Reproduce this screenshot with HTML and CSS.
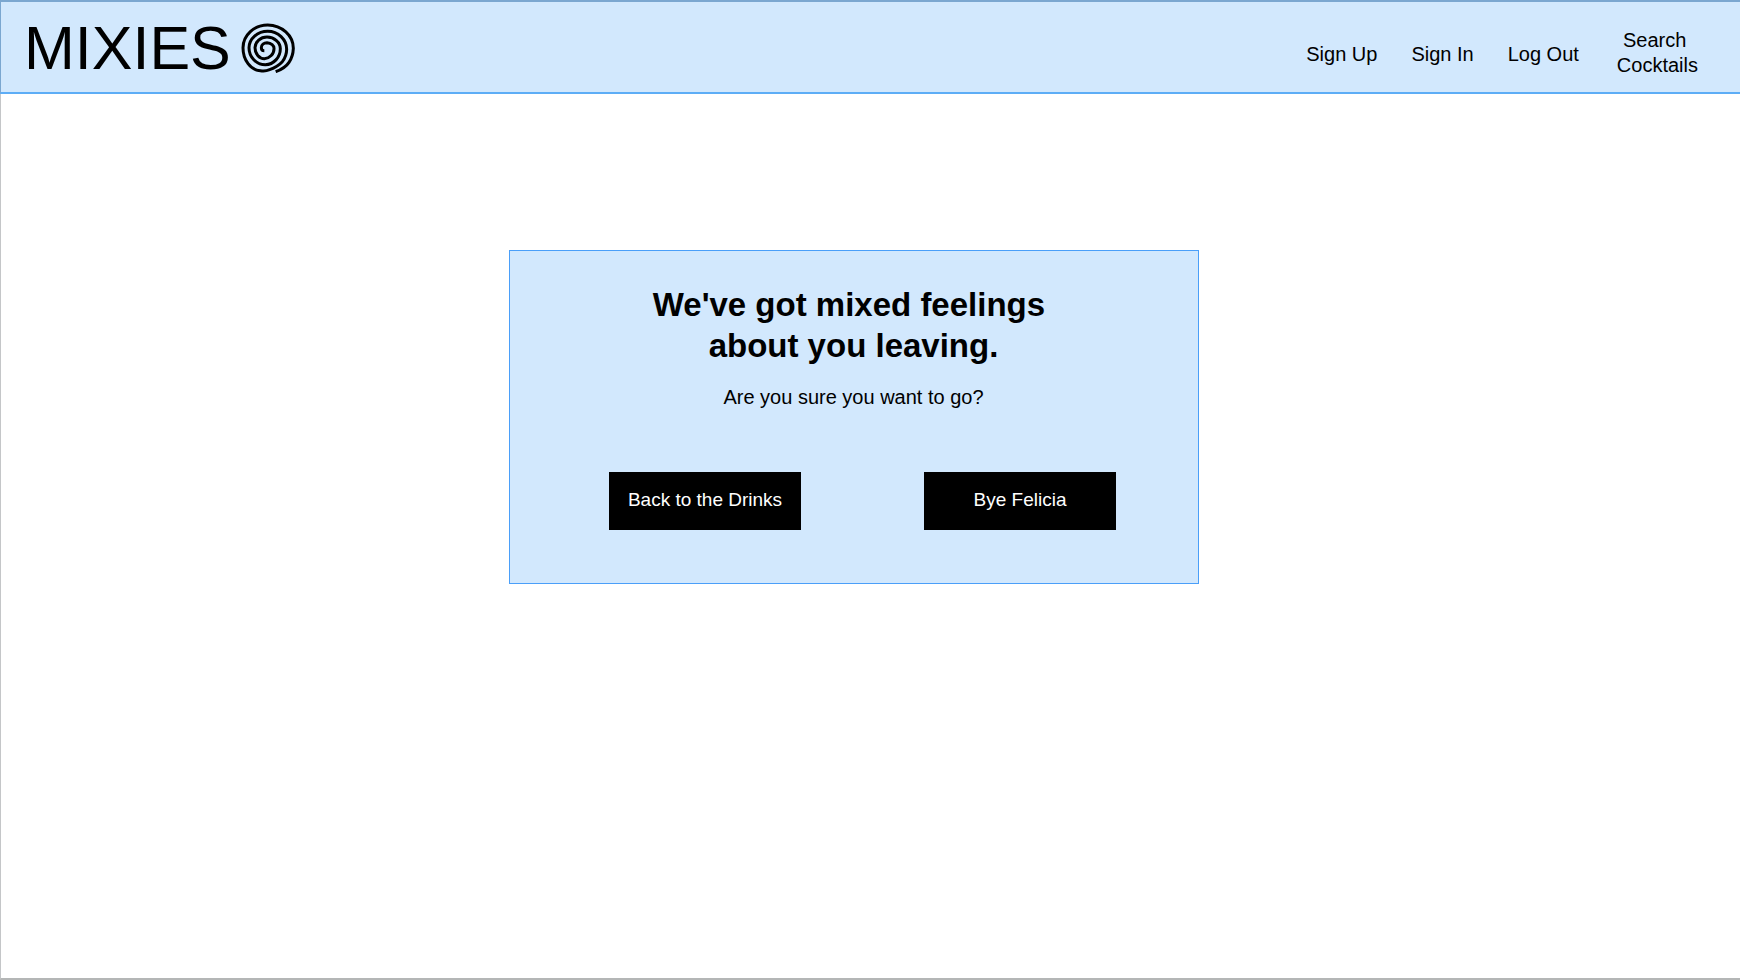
FILE: index.html
```html
<!DOCTYPE html>
<html lang="en">
<head>
<meta charset="utf-8">
<title>Mixies</title>
<link rel="stylesheet" href="styles.css">
</head>
<body>
<div class="page">
  <header class="header">
    <a class="brand" href="#">
      <span class="brand-name">MIXIES</span>
      <svg class="brand-mark" viewBox="20 26 162 150" aria-hidden="true">
        <path d="M124 172Q152 162 164 144A54 69 0 0 0 177 102A78 70 0 0 0 100 32A74 69 0 0 0 26 100A54 69 0 0 0 78 169Q92 172 106 166Q130 157 144 142A50 56 0 0 0 157 105A57 54 0 0 0 100 51A56 50 0 0 0 44 100A49 51 0 0 0 93 151A46 48 0 0 0 138 103A41 35 0 0 0 98 68A36 33 0 0 0 62 100A28 33 0 0 0 90 133A31 30 0 0 0 119 103A23 17 0 0 0 98 85A17 15 0 0 0 81 100Q81 109 90 109"/>
      </svg>
    </a>
    <nav class="nav">
      <a href="#">Sign Up</a>
      <a href="#">Sign In</a>
      <a href="#">Log Out</a>
      <a class="nav-search" href="#">Search <br>Cocktails</a>
    </nav>
  </header>
  <main class="main">
    <section class="card">
      <h1 class="title">We've got mixed feelings <br>about you leaving.</h1>
      <p class="question">Are you sure you want to go?</p>
      <div class="actions">
        <button class="button" type="button">Back to the Drinks</button>
        <button class="button" type="button">Bye Felicia</button>
      </div>
    </section>
  </main>
</div>
</body>
</html>
```
FILE: styles.css
```css
* {
  box-sizing: border-box;
}

body {
  margin: 0;
  background: #fff;
  color: #000;
  font-family: "Liberation Sans", Arial, sans-serif;
}

.page {
  display: flex;
  flex-direction: column;
  min-height: 100vh;
  border-left: 1px solid #c4c6c8;
  border-bottom: 2px solid #b4b6b6;
}

.header {
  display: flex;
  align-items: center;
  justify-content: space-between;
  min-height: 94px;
  margin-left: -1px;
  padding: 0 42px 0 23px;
  border: 2px solid #7ba7d0;
  border-width: 2px 0 2px 1px;
  border-bottom-color: #5dadf6;
  background: #d2e8fd;
}

.brand {
  display: flex;
  align-items: center;
  gap: 10px;
  padding-top: 2px;
  color: #000;
  text-decoration: none;
}

.brand-name {
  font-size: 61px;
  line-height: 72px;
}

.brand-mark {
  width: 54px;
  height: 50px;
  fill: none;
  stroke: #000;
  stroke-width: 9;
}

.nav {
  display: flex;
  align-items: center;
  gap: 34px;
  padding-top: 11px;
  font-size: 20px;
  line-height: 25px;
  text-align: center;
}

.nav a {
  padding-top: 3px;
  color: #000;
  text-decoration: none;
  white-space: break-spaces;
}

.nav .nav-search {
  padding: 0 0 0 4px;
}

.main {
  display: flex;
  justify-content: center;
  padding: 156px 34px 40px 0;
}

.card {
  width: 100%;
  max-width: 690px;
  padding: 33px 24px 53px;
  border: 1px solid #4a9ff9;
  background: #d2e8fd;
  text-align: center;
}

.title {
  margin: 0;
  font-size: 33px;
  line-height: 41px;
  white-space: break-spaces;
}

.question {
  margin: 19px 0 0;
  font-size: 20px;
  line-height: 24px;
}

.actions {
  display: flex;
  flex-wrap: wrap;
  justify-content: center;
  gap: 24px 123px;
  margin-top: 63px;
  padding-left: 18px;
}

.button {
  width: 192px;
  height: 58px;
  padding: 0 0 2px;
  border: 0;
  background: #000;
  color: #fff;
  font-family: inherit;
  font-size: 19px;
}
```
